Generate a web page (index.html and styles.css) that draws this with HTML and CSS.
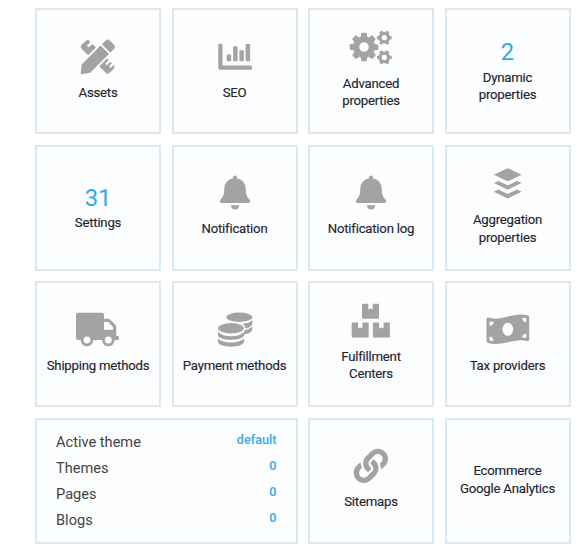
FILE: index.html
```
<!DOCTYPE html>
<html lang="en">
<head>
<meta charset="utf-8">
<title>Dashboard</title>
<link rel="stylesheet" href="styles.css">
</head>
<body>
<main class="grid">
  <section class="tile">
    <svg class="icon" viewBox="0 0 44 48"><g transform="translate(21.6 21.9) rotate(-45) scale(.92)">
      <path d="M-26 0L-18-6.500H11V6.500H-18L-25.600 1Z"/>
      <path d="M13-6.500h5.500q3.500 0 3.500 3.500v6q0 3.500-3.500 3.500H13z"/>
      <path d="M-6-8.500V-18.500Q-6-21.500-3-21.500H3Q6-21.500 6-18.500V-17H0.500V-14H6V-8.500Z"/>
      <path d="M-6 8.500H6V11H.5V13.500H6V16H1.500V18.500H6Q6 21.500 3 21.500H-3Q-6 21.500-6 18.500Z"/>
    </g></svg>
    <span class="label">Assets</span>
  </section>
  <section class="tile">
    <svg class="icon" viewBox="0 0 44 48">
      <path d="M6.300 8.700H8.500Q9.500 8.700 9.500 9.700V30.500H38Q39 30.500 39 31.500V33.700Q39 34.700 38 34.700H7.300Q5.300 34.700 5.300 32.700V9.700Q5.300 8.700 6.300 8.700Z"/>
      <rect x="13.700" y="19.500" width="4.500" height="6.700" rx="1"/><rect x="20.100" y="11.200" width="4.500" height="15" rx="1"/><rect x="26.400" y="15.200" width="4.500" height="11" rx="1"/><rect x="32.600" y="9" width="4.500" height="17.200" rx="1"/>
    </svg>
    <span class="label">SEO</span>
  </section>
  <section class="tile">
    <svg class="icon" viewBox="0 0 44 48">
      <path transform="translate(.7 6.800) scale(.0186) translate(0 -128)" d="M1024 896q0-106-75-181t-181-75-181 75-75 181 75 181 181 75 181-75 75-181zm512-109v222q0 12-8 23t-20 13l-185 28q-19 54-39 91 35 50 107 138 10 12 10 25t-9 23q-27 37-99 108t-94 71q-12 0-26-9l-138-108q-44 23-91 38-16 136-29 186-7 28-36 28h-222q-14 0-24.500-8.500t-11.500-21.500l-28-184q-49-16-90-37l-141 107q-10 9-25 9-14 0-25-11-126-114-165-168-7-10-7-23 0-12 8-23 15-21 51-66.500t54-70.500q-27-50-41-99l-183-27q-13-2-21-12.500t-8-23.500v-222q0-12 8-23t19-13l186-28q14-46 39-92-40-57-107-138-10-12-10-24 0-10 9-23 26-36 98.500-107.500t94.500-71.500q13 0 26 10l138 107q44-23 91-38 16-136 29-186 7-28 36-28h222q14 0 24.500 8.500t11.500 21.500l28 184q49 16 90 37l142-107q9-9 24-9 13 0 25 10 129 119 165 170 7 8 7 22 0 12-8 23-15 21-51 66.500t-54 70.500q26 50 41 98l183 28q13 2 21 12.500t8 23.500z"/>
      <g class="line">
        <g id="cog" transform="translate(35.300 11.700)"><circle r="4.200" stroke-width="3.200"/><path stroke-width="3.400" d="M-7.300 0H-4M4 0H7.300M-3.650-6.300L-2-3.460M2 3.460L3.650 6.300M3.650-6.300L2-3.460M-2 3.460L-3.650 6.300"/></g>
        <use href="#cog" y="19.700"/>
      </g>
    </svg>
    <span class="label">Advanced<br>properties</span>
  </section>
  <section class="tile">
    <span class="count">2</span>
    <span class="label">Dynamic<br>properties</span>
  </section>

  <section class="tile">
    <span class="count">31</span>
    <span class="label">Settings</span>
  </section>
  <section class="tile">
    <svg class="icon" viewBox="0 0 44 48"><path id="bell" d="M22 4.400Q24 4.400 24.200 7.600C29.500 8.500 32.500 12.500 32.700 18C32.900 24.500 34.500 26.500 36.500 28.500Q37.500 29.600 37 31Q36.500 31.900 35.400 31.900H8.600Q7.500 31.900 7 31Q6.500 29.600 7.500 28.500C9.500 26.500 11.100 24.500 11.300 18C11.500 12.500 14.500 8.500 19.800 7.600Q20 4.400 22 4.400ZM17.800 34.200H26.200Q25.400 38.600 22 38.600T17.800 34.200Z"/></svg>
    <span class="label">Notification</span>
  </section>
  <section class="tile">
    <svg class="icon" viewBox="0 0 44 48"><use href="#bell"/></svg>
    <span class="label">Notification log</span>
  </section>
  <section class="tile">
    <svg class="icon" viewBox="0 0 44 48"><path d="M21.700 6.200L35.600 12.700L21.700 19.300L7.800 12.700Z"/><path id="layer" d="M7.800 21L12.300 18.900L21.700 23.300L31.100 18.900L35.600 21L21.700 27.700Z"/><use href="#layer" y="8.700"/></svg>
    <span class="label">Aggregation<br>properties</span>
  </section>

  <section class="tile">
    <svg class="icon" viewBox="0 0 44 48">
      <path fill-rule="evenodd" d="M2.500 4.700H25.500Q28 4.700 28 7.200V10.700H32Q33.300 10.700 34.300 11.700L39.300 16.700Q40.300 17.700 40.300 19V28H42Q43 28 43 29V31Q43 32 42 32H2.500Q0 32 0 29.500V7.200Q0 4.700 2.500 4.700ZM28 14V21.700H37V19L32.300 14Z"/>
      <circle cx="11" cy="32" r="6.300"/><circle cx="32.300" cy="32" r="6.300"/>
      <g class="cut"><circle cx="11" cy="32" r="3.400"/><circle cx="32.300" cy="32" r="3.400"/></g>
    </svg>
    <span class="label">Shipping methods</span>
  </section>
  <section class="tile">
    <svg class="icon" viewBox="0 0 44 48">
      <ellipse cx="26.300" cy="9.200" rx="13" ry="4.700"/>
      <path d="M30 15.700Q36 15.200 39.300 12.200V16Q38 20 30 21Z"/>
      <path d="M31 22.500Q36 21.500 39.300 18.800V22Q38 25.500 31 26.500Z"/>
      <ellipse class="outline" cx="18" cy="20.200" rx="13.600" ry="6"/>
      <path d="M5 24Q9.500 28.200 18 28.200T31 24V27.500C30 33.200 6 33.200 5 27.500Z"/>
      <path d="M5 30.700Q9.500 34.400 18 34.400T31 30.700V34C30 40.200 6 40.200 5 34Z"/>
    </svg>
    <span class="label">Payment methods</span>
  </section>
  <section class="tile">
    <svg class="icon" viewBox="0 0 44 48">
      <path id="box" d="M14 4.700H19.300V10.600L21.500 9.600L23.700 10.600V4.700H29Q30 4.700 30 5.700V18.700Q30 19.700 29 19.700H14Q13 19.700 13 18.700V5.700Q13 4.700 14 4.700Z"/>
      <use href="#box" x="-10.300" y="18.900"/><use href="#box" x="10.900" y="18.900"/>
    </svg>
    <span class="label">Fulfillment<br>Centers</span>
  </section>
  <section class="tile">
    <svg class="icon" viewBox="0 0 44 48">
      <path d="M2.300 9.600C15 14 27 3.800 41.500 7.200Q43.200 7.700 43.200 9.300V31.500Q43.200 33.300 41.200 32.900C28 29.500 16 39.200 2 34.900Q.5 34.400 .5 32.800V11Q.5 9.100 2.300 9.600Z"/>
      <g class="cut"><ellipse cx="21.800" cy="21.300" rx="5.300" ry="6.500"/><path d="M3.500 13.500Q6.500 14 8 13.800Q7.500 17.500 3.500 18ZM3.500 28.500Q7 29 7.600 32.900Q5.500 32.800 3.500 32.300ZM36 10Q38.500 9.700 40.300 10.100V14.300Q36.800 14 36 10ZM40.300 25.500V29.700Q38.500 29.400 36 29.400Q36.500 26 40.300 25.500Z"/></g>
    </svg>
    <span class="label">Tax providers</span>
  </section>

  <section class="tile wide">
    <dl class="stats">
      <div class="row"><dt>Active theme</dt><dd>default</dd></div>
      <div class="row"><dt>Themes</dt><dd>0</dd></div>
      <div class="row"><dt>Pages</dt><dd>0</dd></div>
      <div class="row"><dt>Blogs</dt><dd>0</dd></div>
    </dl>
  </section>
  <section class="tile">
    <svg class="icon" viewBox="0 0 44 48"><path transform="translate(4.700 4.700) scale(.067)" d="M326.612 185.391c59.747 59.809 58.927 155.698.36 214.590-.11.12-.24.25-.36.37l-67.200 67.200c-59.270 59.270-155.699 59.262-214.960 0-59.270-59.260-59.270-155.700 0-214.960l37.106-37.106c9.840-9.840 26.786-3.300 27.294 10.606.648 17.722 3.826 35.527 9.690 52.721 1.986 5.822.567 12.262-3.783 16.612l-13.087 13.087c-28.026 28.026-28.905 73.660-1.155 101.960 28.024 28.579 74.086 28.749 102.325.51l67.200-67.190c28.191-28.191 28.073-73.757 0-101.830-3.701-3.694-7.429-6.564-10.341-8.569a16.037 16.037 0 0 1-6.947-12.606c-.396-10.567 3.348-21.456 11.698-29.806l21.054-21.055c5.521-5.521 14.182-6.199 20.584-1.731a152.482 152.482 0 0 1 20.522 17.197zM467.547 44.449c-59.261-59.262-155.690-59.270-214.960 0l-67.200 67.200c-.12.12-.25.25-.36.37-58.566 58.892-59.387 154.781.36 214.590a152.454 152.454 0 0 0 20.521 17.196c6.402 4.468 15.064 3.789 20.584-1.731l21.054-21.055c8.350-8.350 12.094-19.239 11.698-29.806a16.037 16.037 0 0 0-6.947-12.606c-2.912-2.005-6.640-4.875-10.341-8.569-28.073-28.073-28.191-73.639 0-101.830l67.200-67.190c28.239-28.239 74.300-28.069 102.325.51 27.750 28.300 26.872 73.934-1.155 101.960l-13.087 13.087c-4.350 4.350-5.769 10.790-3.783 16.612 5.864 17.194 9.042 34.999 9.690 52.721.509 13.906 17.454 20.446 27.294 10.606l37.106-37.106c59.271-59.259 59.271-155.699.001-214.959z"/></svg>
    <span class="label">Sitemaps</span>
  </section>
  <section class="tile plain">
    <span class="label">Ecommerce<br>Google Analytics</span>
  </section>
</main>
</body>
</html>
```
FILE: styles.css
```
* {
  box-sizing: border-box;
}

body {
  margin: 0;
  background: #fff;
  font-family: Roboto, "Liberation Sans", sans-serif;
}

.grid {
  display: grid;
  grid-template-columns: repeat(4, 126px);
  grid-auto-rows: 126px;
  gap: 10.5px 10.5px;
  padding: 8.400px 0 0 35px;
}

.tile {
  display: flex;
  flex-direction: column;
  align-items: center;
  justify-content: center;
  padding-top: 2px;
  border: 2px solid #dce8f0;
  background: #fcfdff;
}

.plain {
  padding: 0 0 2px;
}

.wide {
  grid-column: span 2;
  align-items: stretch;
  padding: 0;
}

.icon {
  width: 44px;
  height: 48px;
  margin: -9px 0 1px;
  overflow: visible;
  fill: #a3a3a3;
}

.line {
  fill: none;
  stroke: #a3a3a3;
}

.cut {
  fill: #fcfdff;
}

.outline {
  stroke: #fcfdff;
  stroke-width: 1.500px;
}

.label {
  color: #1e2530;
  font-size: 13.200px;
  letter-spacing: -.23px;
  line-height: 17.500px;
  text-align: center;
  white-space: nowrap;
  -webkit-text-stroke: .15px #1e2530;
}

.count {
  margin: -2.500px 0 2.500px;
  color: #34a8e8;
  font-size: 23.800px;
  line-height: 28px;
}

.stats {
  margin: 0;
  padding: 0 19px;
}

.row {
  display: flex;
  justify-content: space-between;
  height: 26.200px;
  line-height: 26px;
}

dt {
  color: #444;
  font-size: 14.600px;
}

dd {
  margin: -2px 0 0;
  color: #43aee9;
  font-size: 12.600px;
  font-weight: 600;
}
```
